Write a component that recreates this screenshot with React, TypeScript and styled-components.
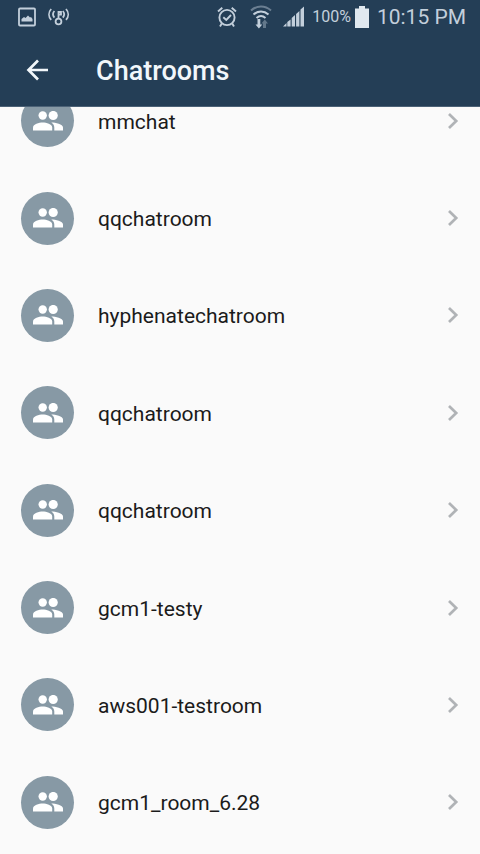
import React from "react";
import styled, { createGlobalStyle } from "styled-components";

const GlobalStyle = createGlobalStyle`
  *, *::before, *::after { box-sizing: border-box; }
  body {
    margin: 0;
    background: #fafafa;
    font-family: Roboto, "Liberation Sans", sans-serif;
  }
`;

const Screen = styled.div`
  display: flex;
  flex-direction: column;
  min-height: 100vh;
`;

const Header = styled.header`
  position: sticky;
  top: 0;
  z-index: 1;
  background: #243e56;
  border-bottom: 1px solid #4c6277;
`;

const StatusBar = styled.div`
  display: flex;
  align-items: center;
  justify-content: space-between;
  height: 33px;
  padding: 0 14px 0 17px;
  color: #c3cfdb;
`;

const StatusGroup = styled.div`
  display: flex;
  align-items: center;
`;

const StatusIcon = styled.svg<{ $gap?: number }>`
  display: block;
  flex: none;
  margin-left: ${({ $gap = 0 }) => $gap}px;
`;

const BatteryLevel = styled.span`
  margin-left: 7px;
  font-size: 16px;
  line-height: 20px;
`;

const Clock = styled.time`
  margin-left: 8px;
  font-size: 21px;
  line-height: 28px;
`;

const AppBar = styled.div`
  display: flex;
  align-items: center;
  height: 73px;
  padding: 0 20px;
`;

const BackButton = styled.button`
  display: flex;
  align-items: center;
  width: 76px;
  height: 48px;
  padding: 0;
  border: 0;
  background: none;
  color: #f2f7fb;
  cursor: pointer;
`;

const Title = styled.h1`
  margin: 0;
  padding-top: 2px;
  color: #f2f7fb;
  font-size: 27px;
  font-weight: 500;
  line-height: 36px;
`;

const RoomList = styled.ul`
  display: flex;
  flex: 1;
  flex-direction: column;
  margin: -35px 0 0;
  padding: 0 0 3px;
  list-style: none;
`;

const RoomItem = styled.li`
  display: flex;
  flex: 1;
  min-height: 97px;
`;

const RoomButton = styled.button`
  display: flex;
  flex: 1;
  align-items: center;
  gap: 24px;
  min-width: 0;
  padding: 0 20px 0 21px;
  border: 0;
  background: none;
  color: #1b1b1b;
  font: inherit;
  text-align: left;
  cursor: pointer;
`;

const Avatar = styled.span`
  display: flex;
  flex: none;
  align-items: center;
  justify-content: center;
  width: 53px;
  height: 53px;
  border-radius: 50%;
  background: #8799a5;
  color: #fff;
`;

const RoomName = styled.span`
  flex: 1;
  overflow: hidden;
  padding-top: 2px;
  font-size: 21px;
  line-height: 30px;
  text-overflow: ellipsis;
  white-space: nowrap;
`;

const rooms = [
  "mmchat",
  "qqchatroom",
  "hyphenatechatroom",
  "qqchatroom",
  "qqchatroom",
  "gcm1-testy",
  "aws001-testroom",
  "gcm1_room_6.28",
];

const PictureIcon = () => (
  <StatusIcon width="20" height="20" viewBox="0 0 20 20" aria-hidden="true">
    <rect x="2" y="1.5" width="16" height="17" rx="1" fill="none" stroke="currentColor" strokeWidth="1.8" />
    <path d="M4.5 14.5v-2.500l2.500-2 1.500 1L11 8.500l2 2 1-.5 1.500 2v2.500z" fill="currentColor" />
  </StatusIcon>
);

const HotspotIcon = () => (
  <StatusIcon $gap={11} width="22" height="20" viewBox="0 0 22 20" fill="none" stroke="currentColor" strokeWidth="1.8" aria-hidden="true">
    <circle cx="10.500" cy="14.500" r="2.900" />
    <path d="M10.500 11.500V4M10.500 5h2.500v2.500h-2.500" />
    <path d="M6.400 4c-1.700 2-1.700 4.600 0 6.600M14.800 4c1.700 2 1.700 4.600 0 6.600M3.200 2c-2.900 3.200-2.900 7.600 0 10.800M18 2c2.900 3.200 2.900 7.600 0 10.800" />
  </StatusIcon>
);

const AlarmIcon = () => (
  <StatusIcon width="20" height="22" viewBox="0 0 20 22" fill="none" stroke="currentColor" strokeWidth="1.900" aria-hidden="true">
    <circle cx="10" cy="11.500" r="7.600" />
    <path d="M6.300 11.200l3 2.800 4.700-5M1 5.500L5.300 1.800M19 5.500L14.700 1.800M4.800 17.500L3 20.500M15.200 17.500l1.800 3" />
  </StatusIcon>
);

const WifiIcon = () => (
  <StatusIcon $gap={13} width="22" height="24" viewBox="0 0 22 24" aria-hidden="true">
    <g fill="none" stroke="currentColor" strokeWidth="2">
      <path d="M1 5.500c6-5.300 14-5.300 20 0" opacity=".45" />
      <path d="M3.500 9.500c4.500-4 10.500-4 15 0" />
      <path d="M6.500 13c2.700-2.300 6.300-2.300 9 0" />
    </g>
    <path d="M7.500 14h2.800v5.500h2L8.900 23.500 5.500 19.500h2z" fill="currentColor" />
    <path d="M13 23v-4.500h-1.500l3.300-4 3.200 4h-2V23z" fill="currentColor" opacity=".4" />
  </StatusIcon>
);

const SignalIcon = () => (
  <StatusIcon $gap={11} width="22" height="21" viewBox="0 0 22 21" fill="currentColor" aria-hidden="true">
    <path d="M0 20.500l3.500-3.500v3.500zM4.300 16l3.300-2.500v7H4.300zM8.700 12l3.300-3v11.500H8.700zM13.100 8l3.300-3v15.500h-3.300zM17.500 3.500L21 .5v20h-3.500z" />
  </StatusIcon>
);

const BatteryIcon = () => (
  <StatusIcon $gap={4} width="14" height="22" viewBox="0 0 14 22" fill="#e0e8ef" aria-hidden="true">
    <path d="M4 0h6v2.500h4V22H0V2.500h4z" />
  </StatusIcon>
);

const BackIcon = () => (
  <svg width="34" height="34" viewBox="0 0 34 34" fill="none" stroke="currentColor" strokeWidth="2.700" aria-hidden="true">
    <path d="M28 17H9M18 7.500L8.500 17l9.500 9.500" />
  </svg>
);

const PeopleIcon = () => (
  <svg width="30" height="20" viewBox="0 0 30 20" fill="currentColor" aria-hidden="true">
    <circle cx="9.700" cy="4.500" r="4.200" />
    <circle cx="20.200" cy="4.500" r="4.600" />
    <path d="M0 19.500v-3c0-3.300 6-5 9.700-5s9.500 1.700 9.500 5v3z" />
    <path d="M18.300 11.500c4.200 0 11.700 1.500 11.700 5v3h-8.700v-3c0-2.200-1.200-3.800-3-5z" />
  </svg>
);

const Chevron = () => (
  <svg width="14" height="18" viewBox="0 0 14 18" fill="none" stroke="#b0b3b6" strokeWidth="2.700" aria-hidden="true">
    <path d="M3 2l7.200 7L3 16" />
  </svg>
);

export default function App() {
  return (
    <>
      <GlobalStyle />
      <Screen>
        <Header>
          <StatusBar>
            <StatusGroup>
              <PictureIcon />
              <HotspotIcon />
            </StatusGroup>
            <StatusGroup>
              <AlarmIcon />
              <WifiIcon />
              <SignalIcon />
              <BatteryLevel>100%</BatteryLevel>
              <BatteryIcon />
              <Clock dateTime="22:15">10:15 PM</Clock>
            </StatusGroup>
          </StatusBar>
          <AppBar>
            <BackButton type="button" aria-label="Back">
              <BackIcon />
            </BackButton>
            <Title>Chatrooms</Title>
          </AppBar>
        </Header>
        <RoomList>
          {rooms.map((name, index) => (
            <RoomItem key={index}>
              <RoomButton type="button">
                <Avatar>
                  <PeopleIcon />
                </Avatar>
                <RoomName>{name}</RoomName>
                <Chevron />
              </RoomButton>
            </RoomItem>
          ))}
        </RoomList>
      </Screen>
    </>
  );
}
